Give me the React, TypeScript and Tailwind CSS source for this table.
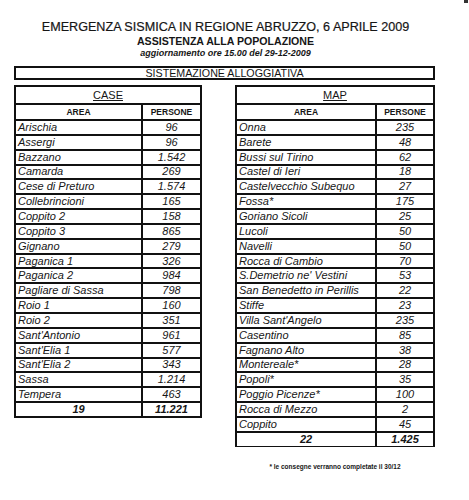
const caseRows: [string, string][] = [
  ["Arischia", "96"],
  ["Assergi", "96"],
  ["Bazzano", "1.542"],
  ["Camarda", "269"],
  ["Cese di Preturo", "1.574"],
  ["Collebrincioni", "165"],
  ["Coppito 2", "158"],
  ["Coppito 3", "865"],
  ["Gignano", "279"],
  ["Paganica 1", "326"],
  ["Paganica 2", "984"],
  ["Pagliare di Sassa", "798"],
  ["Roio 1", "160"],
  ["Roio 2", "351"],
  ["Sant'Antonio", "961"],
  ["Sant'Elia 1", "577"],
  ["Sant'Elia 2", "343"],
  ["Sassa", "1.214"],
  ["Tempera", "463"],
];

const mapRows: [string, string][] = [
  ["Onna", "235"],
  ["Barete", "48"],
  ["Bussi sul Tirino", "62"],
  ["Castel di Ieri", "18"],
  ["Castelvecchio Subequo", "27"],
  ["Fossa*", "175"],
  ["Goriano Sicoli", "25"],
  ["Lucoli", "50"],
  ["Navelli", "50"],
  ["Rocca di Cambio", "70"],
  ["S.Demetrio ne' Vestini", "53"],
  ["San Benedetto in Perillis", "22"],
  ["Stiffe", "23"],
  ["Villa Sant'Angelo", "235"],
  ["Casentino", "85"],
  ["Fagnano Alto", "38"],
  ["Montereale*", "28"],
  ["Popoli*", "35"],
  ["Poggio Picenze*", "100"],
  ["Rocca di Mezzo", "2"],
  ["Coppito", "45"],
];

function Table({
  title,
  rows,
  count,
  total,
  areaWidth,
  width,
  thinBottom,
}: {
  title: string;
  rows: [string, string][];
  count: string;
  total: string;
  areaWidth: string;
  width: string;
  thinBottom?: boolean;
}) {
  return (
    <div className={`${width} border-x-2 border-t-2 ${thinBottom ? "border-b" : "border-b-2"} border-[#111]`}>
      <div className="h-[18px] border-b-2 border-[#111] flex items-center justify-center">
        <span className="text-[11px] leading-none underline underline-offset-[1px]">{title}</span>
      </div>
      <div className={`grid ${areaWidth} h-[16px] border-b-2 border-[#111] text-[8.5px] font-bold leading-none`}>
        <div className="border-r-2 border-[#111] flex items-center justify-center">AREA</div>
        <div className="flex items-center justify-center">PERSONE</div>
      </div>
      {rows.map(([area, n]) => (
        <div key={area} className={`grid ${areaWidth} h-[14.85px] border-b-2 border-[#111] text-[11px] italic leading-none`}>
          <div className="border-r-2 border-[#111] flex items-center pl-[2px] whitespace-nowrap">{area}</div>
          <div className="flex items-center justify-center">{n}</div>
        </div>
      ))}
      <div className={`grid ${areaWidth} h-[12.85px] text-[11px] italic font-bold leading-none`}>
        <div className="border-r-2 border-[#111] flex items-center justify-center">{count}</div>
        <div className="flex items-center justify-center">{total}</div>
      </div>
    </div>
  );
}

export default function App() {
  return (
    <div className="relative w-[469px] h-[500px] bg-white text-[#161616] font-['Liberation_Sans',Arial,sans-serif]">
      <span className="absolute right-[1px] top-0 w-[4px] h-[3px] bg-[#333]" />
      <div className="pt-[19px] flex flex-col items-center w-[451px]">
        <div className="text-[12.6px] leading-[16px] whitespace-nowrap [-webkit-text-stroke:0.2px_#161616]">
          EMERGENZA SISMICA IN REGIONE ABRUZZO, 6 APRILE 2009
        </div>
        <div className="text-[10.6px] leading-[13px] font-bold">ASSISTENZA ALLA POPOLAZIONE</div>
        <div className="text-[9px] leading-[11px] font-bold italic">aggiornamento ore 15.00 del 29-12-2009</div>
      </div>
      <div className="ml-[14px] mt-[7px] w-[421px] h-[14px] border-2 border-[#111] flex items-center justify-center">
        <span className="text-[10.7px] leading-[10px]">SISTEMAZIONE ALLOGGIATIVA</span>
      </div>
      <div className="flex items-start ml-[14px] mt-[5px] gap-[33px]">
        <Table title="CASE" rows={caseRows} count="19" total="11.221" areaWidth="grid-cols-[127px_1fr]" width="w-[188px]" />
        <div className="flex flex-col items-center">
          <Table
            title="MAP"
            rows={mapRows}
            count="22"
            total="1.425"
            areaWidth="grid-cols-[140px_1fr]"
            width="w-[200px]"
            thinBottom
          />
          <div className="mt-[17px] text-[6.5px] font-bold leading-none whitespace-nowrap">
            * le consegne verranno completate il 30/12
          </div>
        </div>
      </div>
    </div>
  );
}
